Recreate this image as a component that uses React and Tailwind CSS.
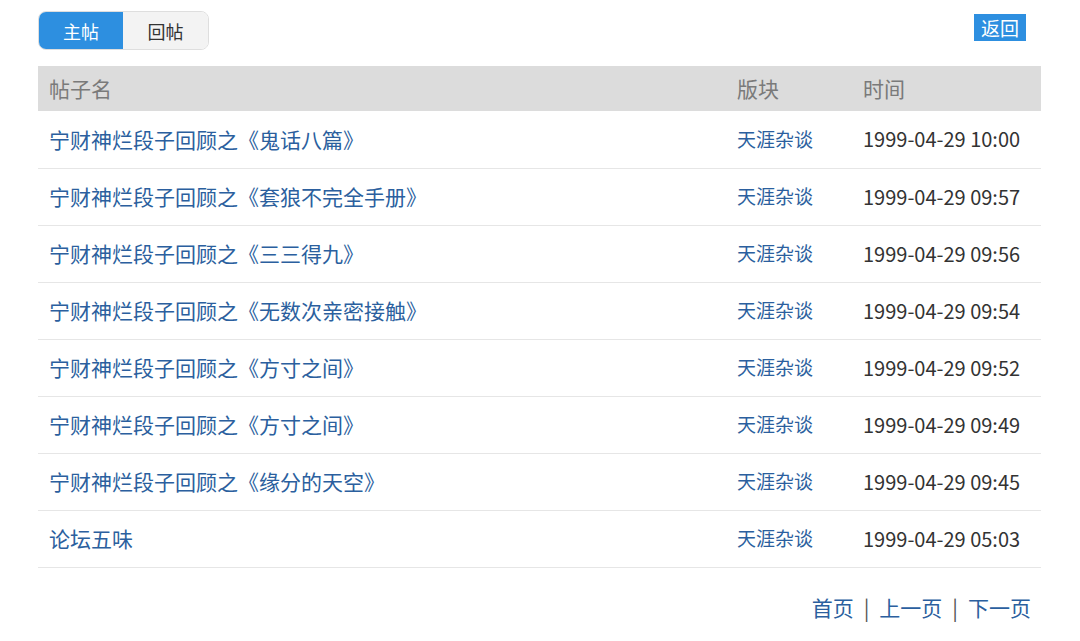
const posts = [
  { title: '宁财神烂段子回顾之《鬼话八篇》', board: '天涯杂谈', time: '1999-04-29 10:00' },
  { title: '宁财神烂段子回顾之《套狼不完全手册》', board: '天涯杂谈', time: '1999-04-29 09:57' },
  { title: '宁财神烂段子回顾之《三三得九》', board: '天涯杂谈', time: '1999-04-29 09:56' },
  { title: '宁财神烂段子回顾之《无数次亲密接触》', board: '天涯杂谈', time: '1999-04-29 09:54' },
  { title: '宁财神烂段子回顾之《方寸之间》', board: '天涯杂谈', time: '1999-04-29 09:52' },
  { title: '宁财神烂段子回顾之《方寸之间》', board: '天涯杂谈', time: '1999-04-29 09:49' },
  { title: '宁财神烂段子回顾之《缘分的天空》', board: '天涯杂谈', time: '1999-04-29 09:45' },
  { title: '论坛五味', board: '天涯杂谈', time: '1999-04-29 05:03' },
];

const App = () => {
  return (
    <div
      className="min-h-[641px] bg-white pl-[38px] pr-[39px] pt-[11px]"
      style={{ fontFamily: '"Noto Sans CJK SC", "Noto Sans", sans-serif' }}
    >
      <div className="flex justify-between items-start">
        <div className="flex h-[39px] rounded-lg overflow-hidden border border-[#dedede]">
          <button className="w-[84px] bg-[#2d8fe0] text-white text-[18px] leading-none">主帖</button>
          <button className="w-[85px] bg-[#f3f3f3] text-[#333] text-[18px] leading-none">回帖</button>
        </div>
        <button className="mt-[3px] mr-[15px] h-[27px] px-[7px] bg-[#2d8fe0] text-white text-[19px] leading-none">
          返回
        </button>
      </div>

      <table className="w-full mt-[16px] border-collapse">
        <thead>
          <tr className="bg-[#dcdcdc] h-[45px] text-[#7a7a7a] text-[21px]">
            <th className="text-left font-normal pl-[11px]">帖子名</th>
            <th className="text-left font-normal w-[126px]">版块</th>
            <th className="text-left font-normal w-[178px]">时间</th>
          </tr>
        </thead>
        <tbody>
          {posts.map((p, i) => (
            <tr key={i} className="h-[57px] border-b border-[#e6e6e6]">
              <td className="pl-[11px] text-[21px] text-[#2b5f9e]">{p.title}</td>
              <td className="text-[19px] text-[#2b5f9e]">{p.board}</td>
              <td className="text-[20px] text-[#333]">{p.time}</td>
            </tr>
          ))}
        </tbody>
      </table>

      <div className="flex justify-end items-center gap-[10px] mt-[24px] pr-[10px] text-[21px] text-[#2b5f9e]">
        <span>首页</span>
        <span className="text-[#555]">|</span>
        <span>上一页</span>
        <span className="text-[#555]">|</span>
        <span>下一页</span>
      </div>
    </div>
  );
};

export default App;
